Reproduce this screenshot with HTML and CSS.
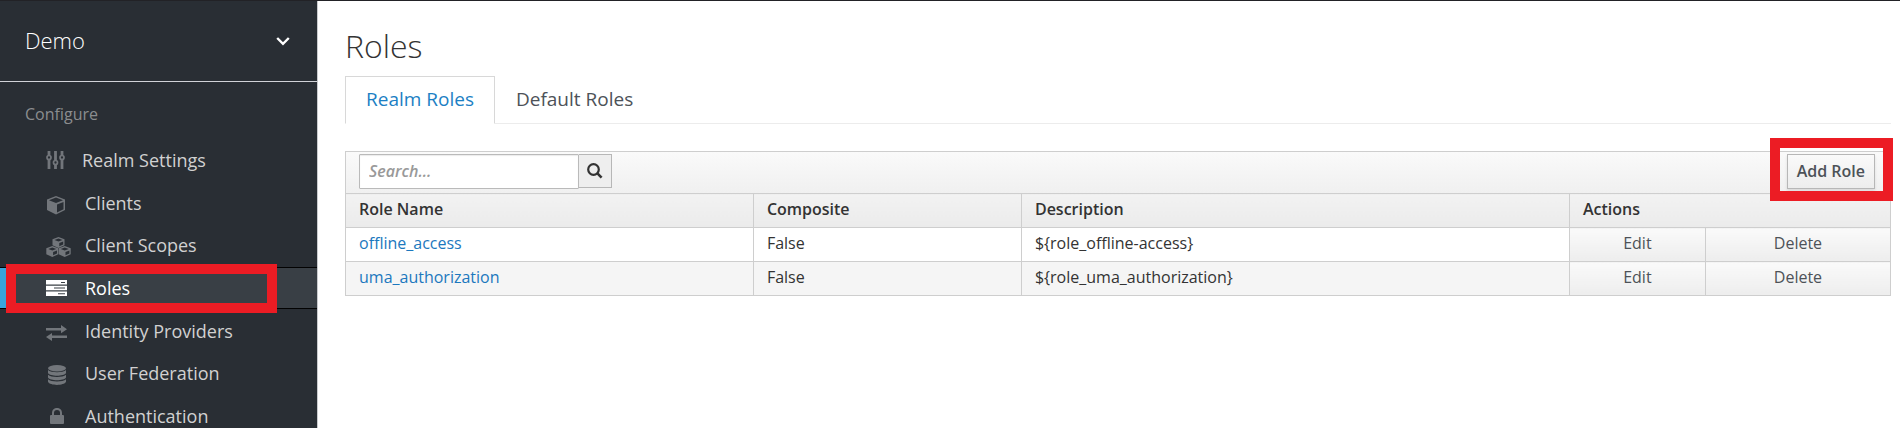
FILE: index.html
```html
<!DOCTYPE html>
<html lang="en">
<head>
<meta charset="utf-8">
<title>Roles</title>
<link rel="stylesheet" href="styles.css">
</head>
<body>
<div class="app">
  <aside class="sidebar">
    <button class="realm" type="button">Demo
      <svg class="chevron" width="14" height="10" viewBox="0 0 14 10"><path d="M1.200 2 7 7.800 12.800 2" fill="none" stroke="#fff" stroke-width="2.400"/></svg>
    </button>
    <h2 class="nav-title">Configure</h2>
    <nav>
      <ul class="nav">
        <li><a class="nav-link" href="#"><span class="icon icon-narrow"><svg width="19" height="20" viewBox="0 0 19 20"><g fill="none" stroke="currentColor" stroke-width="2.800"><path d="M3 1v4M3 10v9M9.500 1v9M9.500 15v4M16 1v4M16 10v9"/></g><g fill="none" stroke="currentColor" stroke-width="1.700"><circle cx="3" cy="7.500" r="2"/><circle cx="9.500" cy="12.500" r="2"/><circle cx="16" cy="7.500" r="2"/></g></svg></span>Realm Settings</a></li>
        <li><a class="nav-link" href="#"><span class="icon icon-low"><svg width="20" height="20" viewBox="0 0 20 20"><path d="M10 1 19 4.500v10.500L10 19.500 1 15V4.500Z" fill="currentColor"/><path d="M10 2.500 17 5.200 10 8 3 5.200Z M11 9.500 17.500 7v7.200L11 17.500Z" fill="#292e34"/></svg></span>Clients</a></li>
        <li><a class="nav-link" href="#"><span class="icon icon-low"><svg width="25" height="20" viewBox="0 0 25 20"><g id="cube"><path d="M12.500 0 18.500 2.300v6L12.500 11 6.500 8.300v-6Z" fill="currentColor"/><path d="M12.500 1.400 16.500 3 12.500 4.600 8.500 3Z M13.300 6 17.200 4.400v3.100L13.300 9.300Z" fill="#292e34"/></g><use href="#cube" x="-6.200" y="9"/><use href="#cube" x="6.200" y="9"/></svg></span>Client Scopes</a></li>
        <li><a class="nav-link active" href="#" aria-current="page"><span class="icon"><svg width="21" height="16" viewBox="0 0 21 16"><path d="M0 0h21v4.500H0ZM0 5.700h21v4.500H0ZM0 11.500h21V16H0Z" fill="currentColor"/><path d="M15 2h4v1h-4ZM8 7.500h11v1H8ZM12 13.200h7v1h-7Z" fill="#393f45"/></svg></span>Roles</a><span class="mark mark-nav"></span></li>
        <li><a class="nav-link" href="#"><span class="icon icon-low"><svg width="21" height="16" viewBox="0 0 21 16"><path d="M0 3h15V0l6 4.200-6 4V5.400H0ZM21 10.600H6V8L0 12l6 4v-3h15Z" fill="currentColor"/></svg></span>Identity Providers</a></li>
        <li><a class="nav-link" href="#"><span class="icon icon-low"><svg class="inset" width="18" height="20" viewBox="0 0 18 20"><g fill="currentColor"><ellipse cx="9" cy="3.200" rx="9" ry="3.200"/><path d="M0 5c3 3 15 3 18 0v3c-2 3.600-16 3.600-18 0ZM0 9.700c3 3 15 3 18 0v2.800c-2 3.600-16 3.600-18 0ZM0 14.300c3 3 15 3 18 0v2.500c-2 4.200-16 4.200-18 0Z"/></g></svg></span>User Federation</a></li>
        <li><a class="nav-link" href="#"><span class="icon"><svg class="inset-more" width="14" height="16" viewBox="0 0 14 16"><path d="M3 8V4.800a4 3.900 0 0 1 8 0V8" fill="none" stroke="currentColor" stroke-width="2"/><rect y="7" width="14" height="9" rx="1" fill="currentColor"/></svg></span>Authentication</a></li>
      </ul>
    </nav>
  </aside>
  <main class="content">
    <h1 class="title">Roles</h1>
    <nav class="tabs">
      <a class="tab current" href="#">Realm Roles</a>
      <a class="tab" href="#">Default Roles</a>
    </nav>
    <div class="toolbar">
      <form class="search">
        <input class="search-input" type="text" placeholder="Search..." aria-label="Search">
        <button class="search-button" type="button" aria-label="Search"><svg width="16" height="16" viewBox="0 0 16 16"><circle cx="6.500" cy="6.500" r="5.300" fill="none" stroke="#333" stroke-width="2.200"/><path d="m10.400 10.400 4.200 4.200" stroke="#333" stroke-width="2.600"/></svg></button>
      </form>
      <div class="add-wrap"><button class="add" type="button">Add Role</button><span class="mark mark-add"></span></div>
    </div>
    <table class="roles">
      <colgroup><col class="col-name"><col class="col-composite"><col class="col-description"><col class="col-edit"><col></colgroup>
      <thead>
        <tr><th>Role Name</th><th>Composite</th><th>Description</th><th colspan="2">Actions</th></tr>
      </thead>
      <tbody>
        <tr><td><a class="role-link" href="#">offline_access</a></td><td>False</td><td>${role_offline-access}</td><td class="action"><button class="action-button" type="button">Edit</button></td><td class="action"><button class="action-button" type="button">Delete</button></td></tr>
        <tr><td><a class="role-link" href="#">uma_authorization</a></td><td>False</td><td>${role_uma_authorization}</td><td class="action"><button class="action-button" type="button">Edit</button></td><td class="action"><button class="action-button" type="button">Delete</button></td></tr>
      </tbody>
    </table>
  </main>
</div>
</body>
</html>
```
FILE: styles.css
```css
* { box-sizing: border-box; }
html { height: 100%; overflow: hidden; }
body {
  margin: 0;
  height: 100%;
  overflow: hidden;
  background: #fff;
  color: #333;
  font: 16px/24px "Open Sans", "Noto Sans", sans-serif;
}
button, input { font: inherit; color: inherit; }
a { text-decoration: none; }

.app { display: flex; min-height: 100%; border-top: 1px solid #222226; }

.sidebar {
  flex: none;
  width: 318px;
  background: #292e34;
  border-right: 1px solid #c8cacd;
}
.realm {
  display: flex;
  align-items: center;
  justify-content: space-between;
  width: 100%;
  height: 81px;
  padding: 0 27px 2px 25px;
  border: 0;
  border-bottom: 1px solid #d1d3d8;
  background: none;
  color: #fff;
  font-size: 22px;
  font-weight: 300;
}
.chevron { margin-top: 2px; }
.nav-title {
  margin: 0;
  padding: 20px 25px 0;
  color: #8b8d8f;
  font-size: 16px;
  font-weight: 400;
}
.nav { margin: 0; padding: 13px 0 0; list-style: none; }
.nav li { position: relative; }
.nav li:first-child, .nav li:nth-child(6) { margin-bottom: 1px; }
.nav-link {
  display: flex;
  align-items: center;
  height: 42px;
  padding-left: 46px;
  color: #d1d1d1;
  font-size: 18px;
}
.nav-link.active {
  margin: 1px 0;
  border: solid #030303;
  border-width: 1px 0;
  background: #393f45;
  box-shadow: inset 6px 0 #39a5dc;
  color: #fff;
}
.icon { display: flex; flex: none; width: 39px; color: #72767b; }
.active .icon { color: #fff; }
.icon-narrow { width: 36px; }
.icon-low { padding-top: 4px; }
.inset { margin-left: 2px; }
.inset-more { margin-left: 4px; }

.mark { position: absolute; border: 10px solid #ec1c24; pointer-events: none; }
.mark-nav { top: -3px; bottom: -4px; left: 6px; right: 40px; }
.mark-add { top: -16px; bottom: -12px; left: -17px; right: -18px; }

.content { flex: 1; min-width: 0; padding: 23px 9px 0 27px; }
.title { margin: 0; font-size: 32px; line-height: 44px; font-weight: 300; }
.tabs { display: flex; height: 48px; margin-top: 8px; border-bottom: 1px solid #ececec; }
.tab { height: 48px; padding: 0 20px; color: #4d5258; font-size: 19px; line-height: 44px; border: 1px solid transparent; }
.tab.current { color: #1c7fc4; border-color: #d8d8d8; border-bottom-color: #fff; }

.toolbar {
  display: flex;
  justify-content: space-between;
  align-items: flex-start;
  height: 42px;
  margin-top: 27px;
  padding: 2px 15px 0 13px;
  border: solid #cecece;
  border-width: 1px 1px 0;
  background: linear-gradient(#fafafa, #f0f0f0);
}
.search { display: flex; align-items: flex-start; }
.search-input {
  width: 220px;
  height: 35px;
  padding: 0 9px 2px;
  border: 1px solid #bababa;
  border-radius: 1px;
  background: #fff;
  box-shadow: inset 0 1px 1px rgba(0, 0, 0, .08);
}
.search-input::placeholder { color: #999; font-style: italic; font-weight: 600; opacity: 1; }
.search-button {
  display: grid;
  place-items: center;
  width: 33px;
  height: 34px;
  padding: 0;
  border: 1px solid #b7b7b7;
  border-left: 0;
  background: #eee;
}
.add-wrap { position: relative; }
.add {
  display: block;
  height: 35px;
  padding: 0 9px 2px;
  border: 1px solid #b7b7b7;
  background: linear-gradient(#fafafa, #ededed);
  box-shadow: 0 2px 3px rgba(3, 3, 3, .1);
  color: #4d5258;
  font-weight: 600;
}

.roles { width: 100%; table-layout: fixed; border-collapse: collapse; }
.col-name { width: 26.4%; }
.col-composite { width: 17.35%; }
.col-description { width: 35.47%; }
.col-edit { width: 8.8%; }
.roles th, .roles td { height: 34px; padding: 0 13px 4px; border: 1px solid #cecece; text-align: left; line-height: 24px; }
.roles th { background: linear-gradient(#f2f2f2, #ebebeb); font-weight: 600; }
.roles tbody tr:nth-child(even) { background: #f5f5f5; }
.roles .action { padding: 0; background: linear-gradient(#fafafa, #ededed); }
.action-button { display: block; width: 100%; height: 33px; padding: 0 0 4px; border: 0; background: none; color: #4d5258; }
.role-link { color: #1c78be; }
```
